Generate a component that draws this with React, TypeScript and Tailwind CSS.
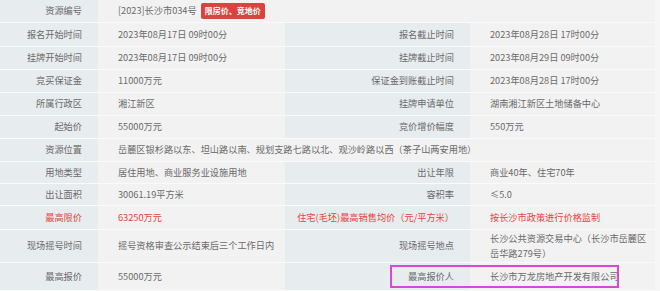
import React from "react";

const LBL = "bg-[#e7ecef] flex items-center justify-end pr-[16px] border-b border-[#fafbfc]";
const VAL = "bg-[#f2f2f2] flex items-center pl-[20px] border-b border-[#fafafa]";

type Cell = { text: React.ReactNode; red?: boolean };

function Row({
  h,
  cells,
  span,
}: {
  h: string;
  cells: Cell[];
  span?: boolean;
}) {
  if (span) {
    return (
      <div className={`grid grid-cols-[98px_557px] ${h}`}>
        <div className={LBL}>{cells[0].text}</div>
        <div className={VAL}>{cells[1].text}</div>
      </div>
    );
  }
  return (
    <div className={`grid grid-cols-[98px_187px_185px_185px] ${h}`}>
      {cells.map((c, i) => (
        <div
          key={i}
          className={`${i % 2 === 0 ? LBL : VAL} ${c.red ? "text-[#e8413c]" : ""} ${
            i === 3 ? "pl-[19px]" : ""
          }`}
        >
          {c.text}
        </div>
      ))}
    </div>
  );
}

export default function App() {
  return (
    <div
      className="relative w-[660px] h-[291px] overflow-hidden bg-[#f6f6f6] text-[9.2px] text-[#6a6a6a]"
      style={{ fontFamily: '"Noto Sans CJK SC", "Noto Sans", sans-serif' }}
    >
      <div className="w-[655px] border-r border-[#e4e4e4]">
        <Row
          h="h-[23px]"
          span
          cells={[
            { text: "资源编号" },
            {
              text: (
                <span className="flex items-center">
                  <span>[2023]长沙市034号</span>
                  <span className="ml-[4px] bg-[#d9443f] text-white font-bold text-[8px] rounded-[2px] px-[4px] h-[16px] flex items-center">
                    限房价、竞地价
                  </span>
                </span>
              ),
            },
          ]}
        />
        <Row
          h="h-[24px]"
          cells={[
            { text: "报名开始时间" },
            { text: "2023年08月17日 09时00分" },
            { text: "报名截止时间" },
            { text: "2023年08月28日 17时00分" },
          ]}
        />
        <Row
          h="h-[23px]"
          cells={[
            { text: "挂牌开始时间" },
            { text: "2023年08月17日 09时00分" },
            { text: "挂牌截止时间" },
            { text: "2023年08月29日 09时00分" },
          ]}
        />
        <Row
          h="h-[23px]"
          cells={[
            { text: "竞买保证金" },
            { text: "11000万元" },
            { text: "保证金到账截止时间" },
            { text: "2023年08月28日 17时00分" },
          ]}
        />
        <Row
          h="h-[23px]"
          cells={[
            { text: "所属行政区" },
            { text: "湘江新区" },
            { text: "挂牌申请单位" },
            { text: "湖南湘江新区土地储备中心" },
          ]}
        />
        <Row
          h="h-[23px]"
          cells={[
            { text: "起始价" },
            { text: "55000万元" },
            { text: "竞价增价幅度" },
            { text: "550万元" },
          ]}
        />
        <Row
          h="h-[23px]"
          span
          cells={[
            { text: "资源位置" },
            {
              text: "岳麓区银杉路以东、坦山路以南、规划支路七路以北、观沙岭路以西（茶子山两安用地）",
            },
          ]}
        />
        <Row
          h="h-[22px]"
          cells={[
            { text: "用地类型" },
            { text: "居住用地、商业服务业设施用地" },
            { text: "出让年限" },
            { text: "商业40年、住宅70年" },
          ]}
        />
        <Row
          h="h-[22px]"
          cells={[
            { text: "出让面积" },
            { text: "30061.19平方米" },
            { text: "容积率" },
            { text: "≤5.0" },
          ]}
        />
        <Row
          h="h-[24px]"
          cells={[
            { text: "最高限价", red: true },
            { text: "63250万元", red: true },
            { text: "住宅(毛坯)最高销售均价（元/平方米）", red: true },
            { text: "按长沙市政策进行价格监制", red: true },
          ]}
        />
        <Row
          h="h-[33px]"
          cells={[
            { text: "现场摇号时间" },
            { text: "摇号资格审查公示结束后三个工作日内" },
            { text: "现场摇号地点" },
            {
              text: (
                <span className="leading-[15px]">
                  长沙公共资源交易中心（长沙市岳麓区
                  <br />
                  岳华路279号）
                </span>
              ),
            },
          ]}
        />
        <Row
          h="h-[28px]"
          cells={[
            { text: "最高报价" },
            { text: "55000万元" },
            { text: "最高报价人" },
            { text: "长沙市万龙房地产开发有限公司" },
          ]}
        />
      </div>
      <div className="absolute left-[390px] top-[265px] w-[229px] h-[23px] border-2 border-[#d946d9]" />
    </div>
  );
}
